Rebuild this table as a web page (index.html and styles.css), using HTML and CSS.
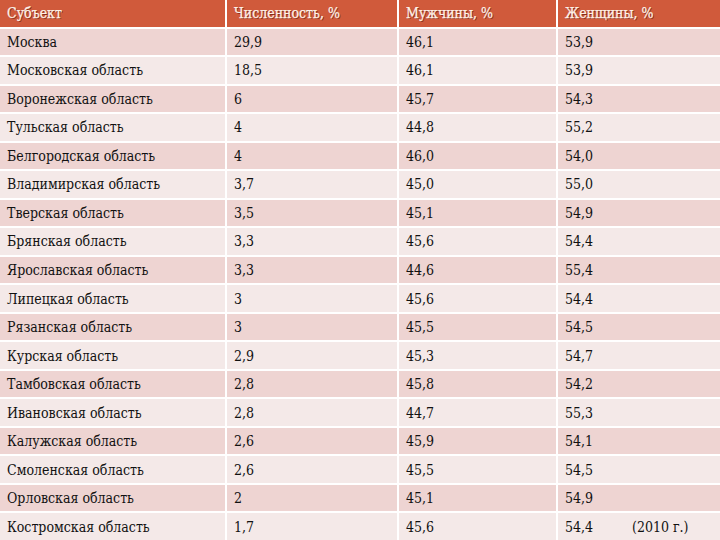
FILE: index.html
```html
<!DOCTYPE html>
<html lang="ru">
<head>
<meta charset="utf-8">
<title>Таблица</title>
<link rel="stylesheet" href="styles.css">
</head>
<body>
<div class="table">
  <div class="cell head">Субъект</div><div class="cell head">Численность, %</div><div class="cell head">Мужчины, %</div><div class="cell head">Женщины, %</div>
  <div class="cell odd">Москва</div><div class="cell odd">29,9</div><div class="cell odd">46,1</div><div class="cell odd">53,9</div>
  <div class="cell even">Московская область</div><div class="cell even">18,5</div><div class="cell even">46,1</div><div class="cell even">53,9</div>
  <div class="cell odd">Воронежская область</div><div class="cell odd">6</div><div class="cell odd">45,7</div><div class="cell odd">54,3</div>
  <div class="cell even">Тульская область</div><div class="cell even">4</div><div class="cell even">44,8</div><div class="cell even">55,2</div>
  <div class="cell odd">Белгородская область</div><div class="cell odd">4</div><div class="cell odd">46,0</div><div class="cell odd">54,0</div>
  <div class="cell even">Владимирская область</div><div class="cell even">3,7</div><div class="cell even">45,0</div><div class="cell even">55,0</div>
  <div class="cell odd">Тверская область</div><div class="cell odd">3,5</div><div class="cell odd">45,1</div><div class="cell odd">54,9</div>
  <div class="cell even">Брянская область</div><div class="cell even">3,3</div><div class="cell even">45,6</div><div class="cell even">54,4</div>
  <div class="cell odd">Ярославская область</div><div class="cell odd">3,3</div><div class="cell odd">44,6</div><div class="cell odd">55,4</div>
  <div class="cell even">Липецкая область</div><div class="cell even">3</div><div class="cell even">45,6</div><div class="cell even">54,4</div>
  <div class="cell odd">Рязанская область</div><div class="cell odd">3</div><div class="cell odd">45,5</div><div class="cell odd">54,5</div>
  <div class="cell even">Курская область</div><div class="cell even">2,9</div><div class="cell even">45,3</div><div class="cell even">54,7</div>
  <div class="cell odd">Тамбовская область</div><div class="cell odd">2,8</div><div class="cell odd">45,8</div><div class="cell odd">54,2</div>
  <div class="cell even">Ивановская область</div><div class="cell even">2,8</div><div class="cell even">44,7</div><div class="cell even">55,3</div>
  <div class="cell odd">Калужская область</div><div class="cell odd">2,6</div><div class="cell odd">45,9</div><div class="cell odd">54,1</div>
  <div class="cell even">Смоленская область</div><div class="cell even">2,6</div><div class="cell even">45,5</div><div class="cell even">54,5</div>
  <div class="cell odd">Орловская область</div><div class="cell odd">2</div><div class="cell odd">45,1</div><div class="cell odd">54,9</div>
  <div class="cell even">Костромская область</div><div class="cell even">1,7</div><div class="cell even">45,6</div><div class="cell even last"><span>54,4</span><span class="note">(2010 г.)</span></div>
</div>
</body>
</html>
```

FILE: styles.css
```css
html, body {
  margin: 0;
  padding: 0;
  background: #ffffff;
}
body {
  width: 720px;
  height: 540px;
  overflow: hidden;
  font-family: "DejaVu Serif", serif;
  font-stretch: condensed;
  font-size: 14px;
  color: #111111;
}
.table {
  display: grid;
  grid-template-columns: 225px 170px 157px 1fr;
  grid-template-rows: repeat(19, 1fr);
  gap: 2px;
  height: 540px;
  background: #ffffff;
}
.cell {
  display: flex;
  align-items: center;
  padding: 0 0 0 7px;
  white-space: nowrap;
}
.head {
  background: #d05a3b;
  color: #fdf1e8;
  text-shadow: 1px 1px 0 #8a2e1a;
  -webkit-text-stroke: 0.25px #fdf1e8;
}
.odd {
  background: #eed4d2;
}
.even {
  background: #f4e9e8;
}
.last {
  gap: 39px;
}
.note {
  font-size: 14px;
}
```
